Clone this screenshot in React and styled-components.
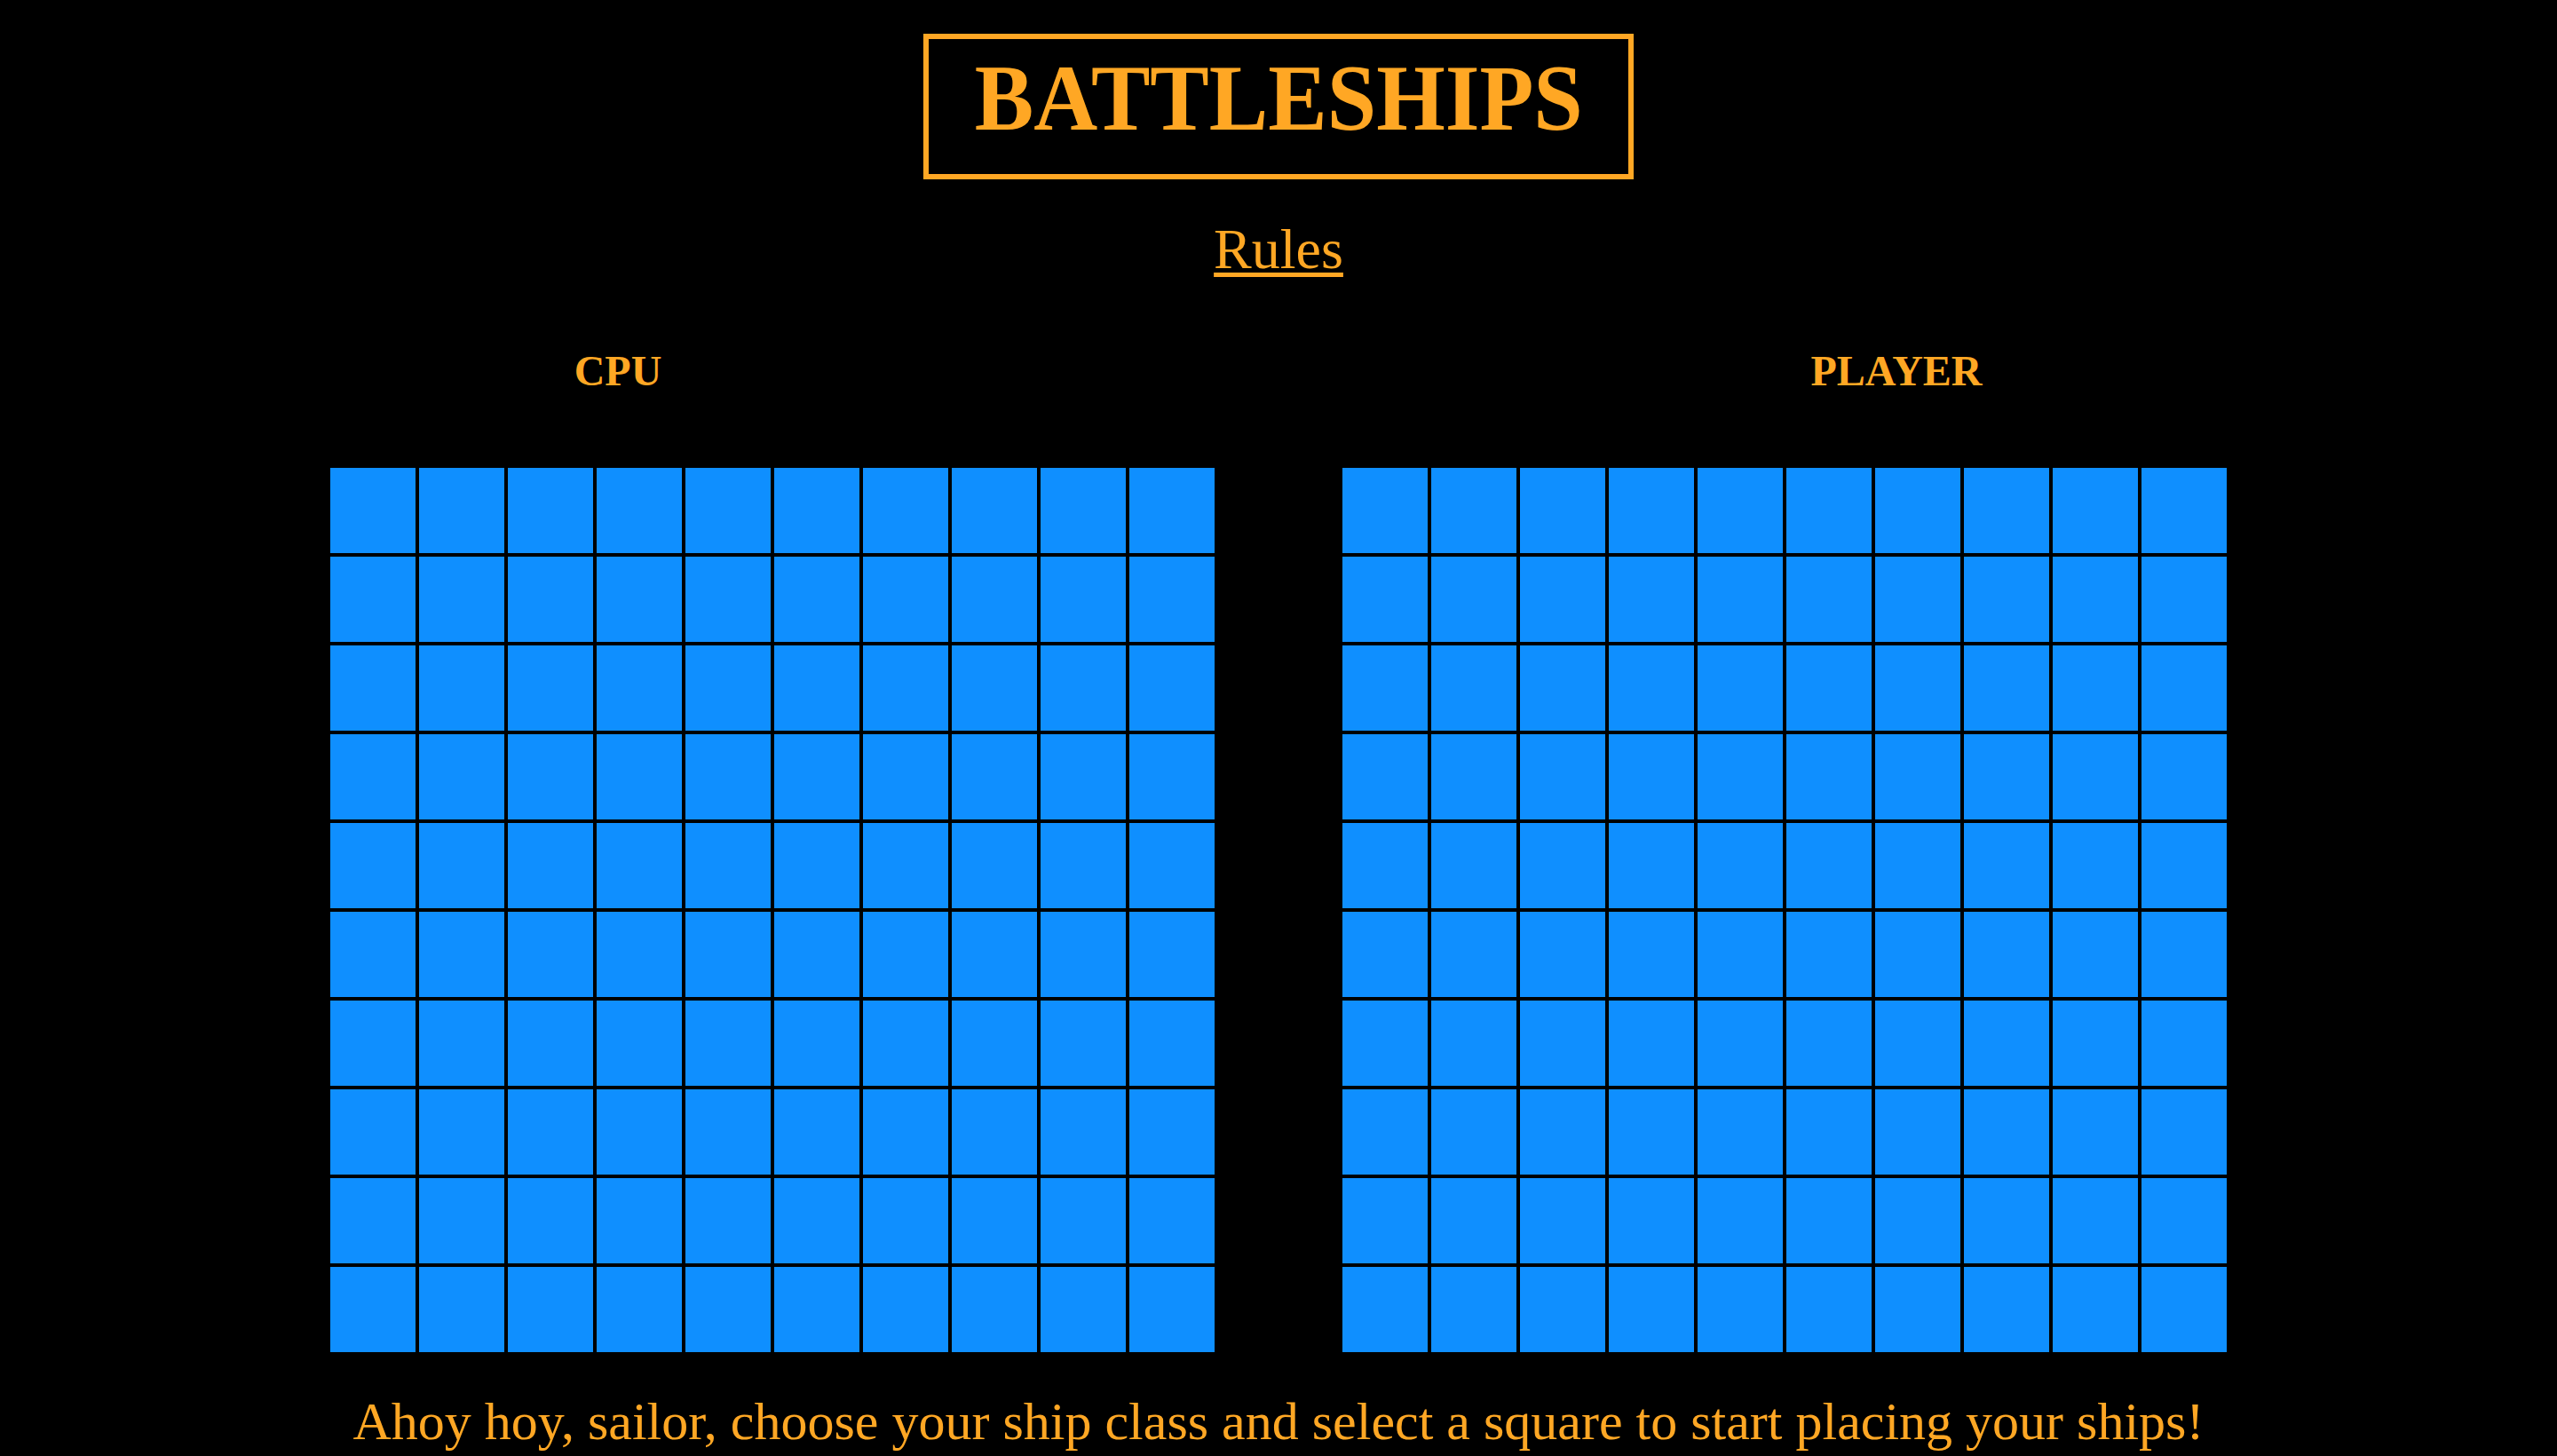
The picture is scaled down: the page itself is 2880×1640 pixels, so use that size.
import React from "react";
import styled, { createGlobalStyle } from "styled-components";

const ORANGE = "#ffa724";
const SEA = "#0f8fff";

const GlobalStyle = createGlobalStyle`
  body {
    margin: 0;
    background: #000;
    font-family: "Liberation Serif", "Times New Roman", serif;
    color: ${ORANGE};
  }
`;

const Page = styled.div`
  display: flex;
  flex-direction: column;
  align-items: center;
  padding-top: 38px;
`;

const TitleBox = styled.header`
  box-sizing: border-box;
  width: 800px;
  border: 6px solid ${ORANGE};
  padding: 14px 0 32px;
  display: flex;
  justify-content: center;
`;

const Title = styled.h1`
  margin: 0;
  display: inline-block;
  font-size: 106px;
  line-height: 106px;
  font-weight: 700;
  transform: scaleX(0.94);
`;

const RulesLink = styled.a`
  margin-top: 42px;
  font-size: 64px;
  color: ${ORANGE};
  text-decoration: underline;
  text-decoration-thickness: 5px;
  text-underline-offset: 5px;
  cursor: pointer;
`;

const Labels = styled.div`
  width: 100%;
  display: grid;
  grid-template-columns: 1fr 1fr;
  margin-top: 72px;
`;

const Label = styled.h2`
  margin: 0;
  padding-right: 48px;
  text-align: center;
  font-size: 48px;
  font-weight: 700;
`;

const Boards = styled.div`
  display: flex;
  gap: 140px;
  margin-top: 80px;
`;

const Board = styled.div`
  display: grid;
  grid-template-columns: repeat(10, 100px);
  grid-auto-rows: 100px;
`;

const Cell = styled.div`
  box-sizing: border-box;
  border: 2px solid #000;
  background: ${SEA};
  cursor: pointer;
`;

const Message = styled.p`
  margin: 42px 0 0;
  font-size: 60px;
  text-align: center;
`;

function Grid({ owner }) {
  const cells = Array.from({ length: 100 }, (_, i) => i);
  return (
    <Board>
      {cells.map((i) => (
        <Cell key={owner + i} />
      ))}
    </Board>
  );
}

export default function App() {
  return (
    <>
      <GlobalStyle />
      <Page>
        <TitleBox>
          <Title>BATTLESHIPS</Title>
        </TitleBox>
        <RulesLink href="#">Rules</RulesLink>
        <Labels>
          <Label>CPU</Label>
          <Label>PLAYER</Label>
        </Labels>
        <Boards>
          <Grid owner="cpu" />
          <Grid owner="player" />
        </Boards>
        <Message>
          Ahoy hoy, sailor, choose your ship class and select a square to start placing your ships!
        </Message>
      </Page>
    </>
  );
}
